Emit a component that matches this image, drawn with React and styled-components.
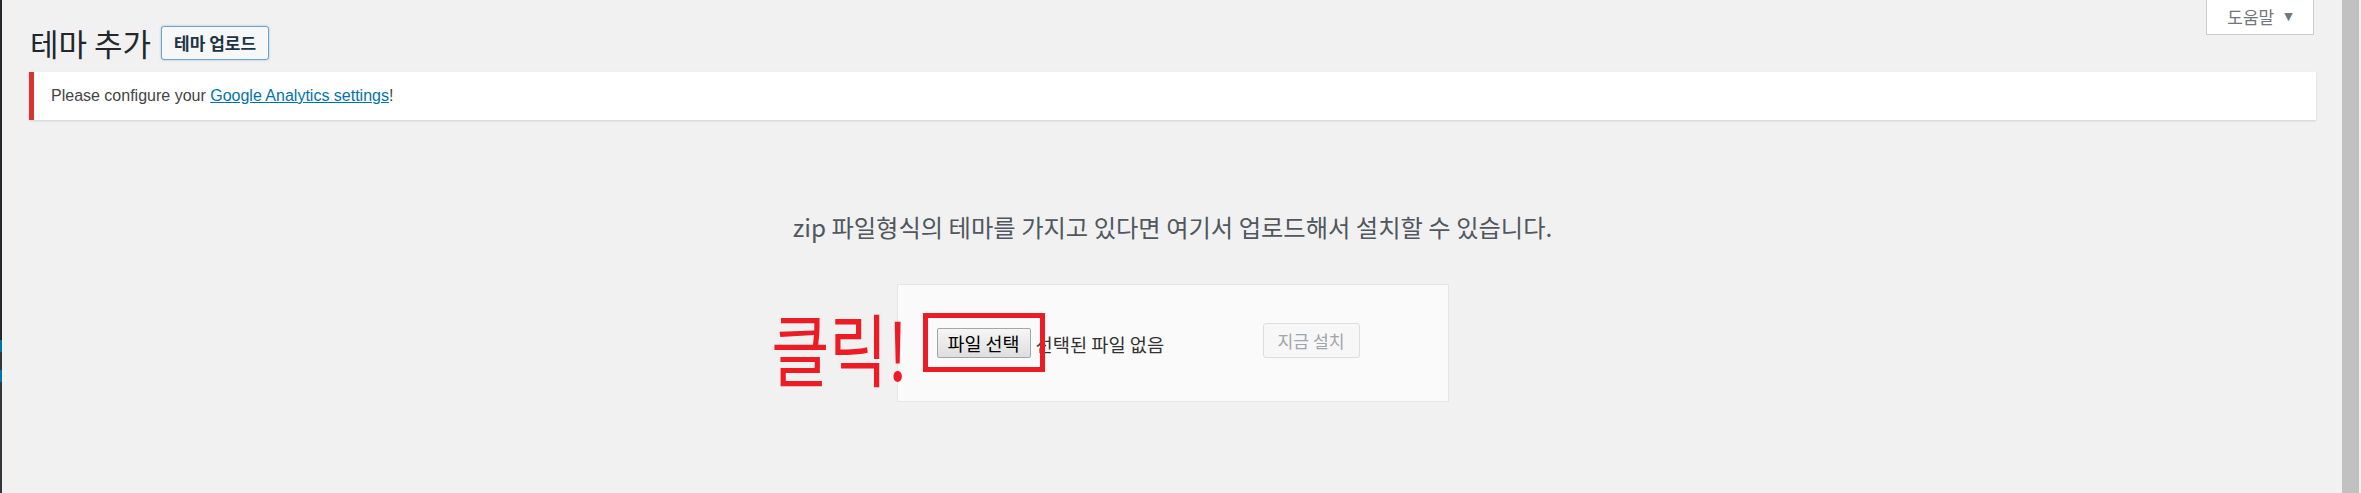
import React from "react";
import styled, { createGlobalStyle } from "styled-components";

const Global = createGlobalStyle`
  html, body { margin: 0; padding: 0; }
  body {
    background: #f1f1f1;
    font-family: "Liberation Sans", "Noto Sans CJK KR", sans-serif;
    overflow: hidden;
  }
`;

const KR = `"Noto Sans CJK KR", "Liberation Sans", sans-serif`;

const Page = styled.div`
  display: flex;
  width: 100vw;
  height: 493px;
  background: #f1f1f1;
`;

const AdminStrip = styled.div`
  width: 2px;
  flex: none;
  display: flex;
  flex-direction: column;
`;

const StripPart = styled.div`
  height: ${(p) => (p.$h ? `${p.$h}px` : "auto")};
  flex: ${(p) => (p.$h ? "none" : "1")};
  background: ${(p) => p.$c};
`;

const Main = styled.main`
  flex: 1;
  min-width: 0;
  padding: 0 26px 0 27px;
  display: flex;
  flex-direction: column;
`;

const TopRow = styled.div`
  display: flex;
  justify-content: space-between;
  align-items: flex-start;
`;

const TitleGroup = styled.div`
  display: flex;
  align-items: center;
  padding-top: 26px;
  padding-left: 1px;
`;

const Title = styled.h1`
  margin: 0;
  font-family: ${KR};
  font-size: 31px;
  font-weight: 400;
  line-height: 34px;
  color: #23282d;
`;

const TitleAction = styled.button`
  margin-left: 10px;
  height: 34px;
  padding: 0 12px;
  border: 1px solid #6fa3d4;
  border-radius: 3px;
  background: #f6f7f7;
  box-shadow: 0 0 2px rgba(30, 140, 190, 0.5);
  font-family: ${KR};
  font-size: 17px;
  font-weight: 700;
  color: #1d3346;
  line-height: 32px;
  cursor: pointer;
`;

const HelpTab = styled.button`
  width: 108px;
  height: 35px;
  margin-right: 2px;
  border: 1px solid #ccc;
  border-top: none;
  background: #fff;
  display: flex;
  align-items: center;
  justify-content: center;
  gap: 10px;
  font-family: ${KR};
  font-size: 17px;
  color: #72777c;
  padding: 0 0 1px 0;
`;

const Caret = styled.span`
  font-size: 11px;
  color: #72777c;
  font-family: "DejaVu Sans", sans-serif;
`;

const Notice = styled.div`
  margin-top: 12px;
  height: 48px;
  background: #fff;
  border-left: 5px solid #dc3232;
  box-shadow: 0 1px 2px rgba(0, 0, 0, 0.13);
  display: flex;
  align-items: center;
  padding: 0 17px;
  box-sizing: border-box;
`;

const NoticeText = styled.p`
  margin: 0;
  font-family: "Liberation Sans", sans-serif;
  font-size: 16px;
  color: #444;
`;

const Link = styled.a`
  color: #0073aa;
  text-decoration: underline;
`;

const InstallHelp = styled.p`
  margin: 92px 0 0;
  text-align: center;
  font-family: ${KR};
  font-size: 24.3px;
  line-height: 30px;
  color: #50575e;
`;

const UploadForm = styled.form`
  position: relative;
  align-self: center;
  margin-top: 42px;
  width: 552px;
  height: 118px;
  box-sizing: border-box;
  background: #fafafa;
  border: 1px solid #e5e5e5;
  display: flex;
  align-items: center;
  padding-left: 39px;
`;

const FileGroup = styled.div`
  width: 326px;
  display: flex;
  align-items: center;
  gap: 5px;
`;

const FileButton = styled.button`
  width: 94px;
  height: 30px;
  padding: 0;
  border: 1px solid #a5a5a5;
  border-radius: 2px;
  background: linear-gradient(#f6f6f6, #dedede);
  font-family: ${KR};
  font-size: 18.5px;
  color: #000;
  line-height: 28px;
`;

const FileLabel = styled.span`
  font-family: ${KR};
  font-size: 18.7px;
  color: #333;
  white-space: nowrap;
`;

const InstallButton = styled.button`
  width: 97px;
  height: 35px;
  margin-bottom: 5px;
  padding: 0;
  border: 1px solid #ddd;
  border-radius: 3px;
  background: #f7f7f7;
  font-family: ${KR};
  font-size: 17.2px;
  color: #a0a5aa;
`;

const Highlight = styled.div`
  position: absolute;
  left: 25px;
  top: 28px;
  width: 122px;
  height: 59px;
  box-sizing: border-box;
  border: 5px solid #ed1c24;
  pointer-events: none;
`;

const ClickNote = styled.span`
  position: absolute;
  right: calc(100% - 10px);
  top: 17px;
  font-family: ${KR};
  font-size: 79px;
  font-weight: 400;
  line-height: 90px;
  color: #ed1c24;
  white-space: nowrap;
  transform: scaleX(0.8);
  transform-origin: right center;
  pointer-events: none;
`;

const ScrollTrack = styled.div`
  width: 19px;
  flex: none;
  background: #f1f1f1;
  display: flex;
`;

const ScrollThumb = styled.div`
  width: 17px;
  background: #c1c1c1;
`;

export default function App() {
  return (
    <>
      <Global />
      <Page>
        <AdminStrip>
          <StripPart $h={340} $c="#23282d" />
          <StripPart $h={12} $c="#0073aa" />
          <StripPart $h={18} $c="#32373c" />
          <StripPart $h={12} $c="#0073aa" />
          <StripPart $c="#32373c" />
        </AdminStrip>
        <Main>
          <TopRow>
            <TitleGroup>
              <Title>테마 추가</Title>
              <TitleAction type="button">테마 업로드</TitleAction>
            </TitleGroup>
            <HelpTab type="button">
              도움말 <Caret>▼</Caret>
            </HelpTab>
          </TopRow>
          <Notice>
            <NoticeText>
              Please configure your <Link href="#">Google Analytics settings</Link>!
            </NoticeText>
          </Notice>
          <InstallHelp>
            zip 파일형식의 테마를 가지고 있다면 여기서 업로드해서 설치할 수 있습니다.
          </InstallHelp>
          <UploadForm onSubmit={(e) => e.preventDefault()}>
            <FileGroup>
              <FileButton type="button">파일 선택</FileButton>
              <FileLabel>선택된 파일 없음</FileLabel>
            </FileGroup>
            <InstallButton type="button" disabled>
              지금 설치
            </InstallButton>
            <Highlight />
            <ClickNote>클릭!</ClickNote>
          </UploadForm>
        </Main>
        <ScrollTrack>
          <ScrollThumb />
        </ScrollTrack>
      </Page>
    </>
  );
}
